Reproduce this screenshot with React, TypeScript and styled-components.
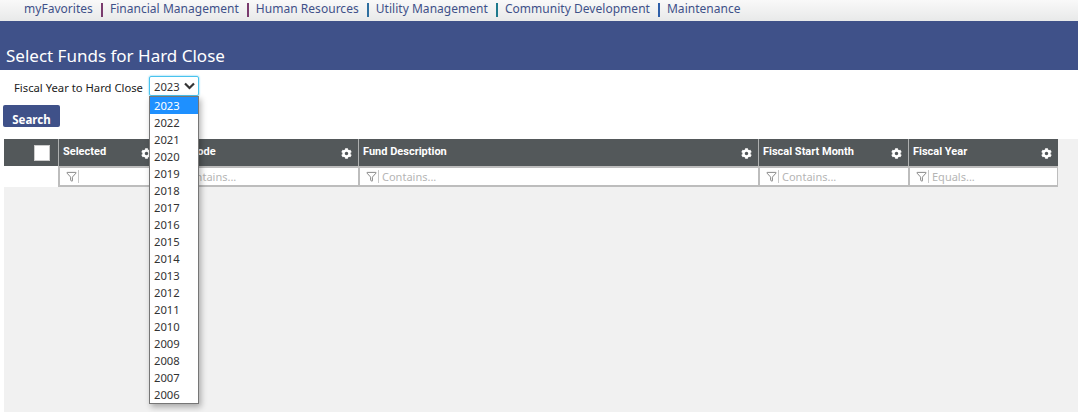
import { Fragment, FunctionComponent } from 'react'
import styled, { createGlobalStyle } from 'styled-components'
import { FaCog } from 'react-icons/fa'
import { Filter } from 'lucide-react'

const GlobalStyle = createGlobalStyle`
  html, body {
    margin: 0;
    padding: 0;
    background: #fff;
  }
  body {
    font-family: 'Noto Sans', 'Open Sans', sans-serif;
    overflow: hidden;
  }
`

const menus = [
  { label: 'myFavorites', bar: '#7a3b6e' },
  { label: 'Financial Management', bar: '#7a3b6e' },
  { label: 'Human Resources', bar: '#2f6f9f' },
  { label: 'Utility Management', bar: '#1f7a8c' },
  { label: 'Community Development', bar: '#2f5fa8' },
  { label: 'Maintenance', bar: '' }
]

const years = Array.from({ length: 18 }, (_, i) => 2023 - i)

const columns = [
  { title: 'Selected', placeholder: '' },
  { title: 'Fund Code', placeholder: 'Contains...' },
  { title: 'Fund Description', placeholder: 'Contains...' },
  { title: 'Fiscal Start Month', placeholder: 'Contains...' },
  { title: 'Fiscal Year', placeholder: 'Equals...' }
]

const Page = styled.div`
  position: relative;
  height: 412px;
  display: flex;
  flex-direction: column;
`

const NavBar = styled.nav`
  height: 21px;
  display: flex;
  align-items: center;
  padding-left: 24px;
  background: linear-gradient(#f9f9f9, #e8e9e9);
  font-size: 12px;
  letter-spacing: 0.03px;
  color: #3f5189;
`

const NavItem = styled.span`
  white-space: nowrap;
  margin-bottom: 4px;
`

const NavBarDivider = styled.span<{ $color: string }>`
  width: 2px;
  height: 14px;
  margin: 0 7px 1px 8px;
  background: ${p => p.$color};
`

const TitleBand = styled.header`
  height: 49px;
  box-sizing: border-box;
  padding: 23px 0 0 6px;
  background: #3f5189;
  color: #fff;
  font-size: 17px;
  line-height: 24px;
`

const SearchForm = styled.div`
  height: 69px;
  box-sizing: border-box;
  padding-top: 6px;
`

const FieldRow = styled.div`
  display: flex;
  align-items: center;
  padding-left: 14px;
  gap: 6px;
  font-size: 11.25px;
  color: #222;
`

const FieldLabel = styled.label`
  margin-top: 3px;
  white-space: nowrap;
`

const YearSelectWrap = styled.div`
  position: relative;
  width: 50px;
  height: 20px;
`

const YearValue = styled.div`
  box-sizing: border-box;
  width: 50px;
  height: 20px;
  display: flex;
  align-items: center;
  justify-content: space-between;
  padding: 0 3px 0 4px;
  border: 1px solid #49c3ee;
  box-shadow: 0 0 2px #49c3ee;
  border-radius: 2px;
  font-size: 11.25px;
  color: #333;
`

const Chevron = styled.svg`
  width: 11px;
  height: 8px;
  fill: none;
  stroke: #333;
  stroke-width: 2.2;
`

const YearList = styled.ul`
  position: absolute;
  top: 20px;
  left: 0;
  width: 50px;
  box-sizing: border-box;
  margin: 0;
  padding: 0;
  list-style: none;
  background: #fff;
  border: 1px solid #767676;
  box-shadow: 2px 3px 6px rgba(0, 0, 0, 0.3);
  z-index: 5;
`

const YearOption = styled.li<{ $active?: boolean }>`
  height: 17px;
  line-height: 17px;
  padding-left: 4px;
  font-size: 11.25px;
  color: ${p => (p.$active ? '#fff' : '#333')};
  background: ${p => (p.$active ? '#1e90ff' : 'transparent')};
`

const SearchButton = styled.button`
  display: block;
  width: 57px;
  height: 22px;
  margin: 9px 0 0 3px;
  padding: 7px 0 0;
  border: 0;
  border-radius: 2px;
  background: #3f5189;
  color: #fff;
  font-family: 'Noto Sans', sans-serif;
  font-size: 11.5px;
  font-weight: 700;
`

const GridArea = styled.section`
  flex: 1;
  margin-left: 4px;
  background: #f1f1f1;
`

const GridTable = styled.div`
  width: 1054px;
  display: grid;
  grid-template-columns: 54px 100px 200px 400px 150px 150px;
`

const CheckHeader = styled.div`
  height: 27px;
  box-sizing: border-box;
  background: #53585a;
  display: flex;
  justify-content: flex-end;
  align-items: center;
  padding-right: 8px;
`

const CheckBox = styled.span`
  width: 14px;
  height: 14px;
  background: #fff;
  border: 1px solid #ccc;
`

const HeaderCell = styled.div`
  position: relative;
  height: 27px;
  box-sizing: border-box;
  background: #53585a;
  border-left: 1px solid #aeb0b0;
  padding: 5px 0 0 4px;
  font-family: Roboto, sans-serif;
  font-size: 11px;
  font-weight: 700;
  line-height: 15px;
  color: #fff;
  white-space: nowrap;
`

const GearIcon = styled(FaCog)`
  position: absolute;
  right: 6px;
  top: 9px;
  width: 11px;
  height: 11px;
  color: #fff;
`

const BlankFilter = styled.div`
  height: 21px;
  background: #fff;
`

const FilterCell = styled.div`
  height: 21px;
  box-sizing: border-box;
  display: flex;
  align-items: center;
  padding-left: 6px;
  background: #fff;
  border-style: solid;
  border-color: #bdbdbd;
  border-width: 2px 0 2px 2px;
  font-size: 11px;
  color: #b5b5b5;
  &:last-child {
    border-right-width: 1px;
  }
`

const FunnelIcon = styled(Filter)`
  width: 11px;
  height: 11px;
  color: #555;
  flex: none;
`

const FilterText = styled.span`
  margin-left: 1px;
  padding-left: 3px;
  border-left: 1px solid #c8c8c8;
  line-height: 13px;
  min-height: 13px;
`

const App: FunctionComponent = () => {
  return (
    <Page>
      <GlobalStyle />
      <NavBar>
        {menus.map(menu => (
          <Fragment key={menu.label}>
            <NavItem>{menu.label}</NavItem>
            {menu.bar && <NavBarDivider $color={menu.bar} />}
          </Fragment>
        ))}
      </NavBar>
      <TitleBand>Select Funds for Hard Close</TitleBand>
      <SearchForm>
        <FieldRow>
          <FieldLabel>Fiscal Year to Hard Close</FieldLabel>
          <YearSelectWrap>
            <YearValue>
              2023
              <Chevron viewBox='0 0 11 8'>
                <path d='M1 1.5l4.5 4.5L10 1.5' />
              </Chevron>
            </YearValue>
            <YearList>
              {years.map((year, i) => (
                <YearOption key={year} $active={i === 0}>
                  {year}
                </YearOption>
              ))}
            </YearList>
          </YearSelectWrap>
        </FieldRow>
        <SearchButton>Search</SearchButton>
      </SearchForm>
      <GridArea>
        <GridTable>
          <CheckHeader>
            <CheckBox />
          </CheckHeader>
          {columns.map(col => (
            <HeaderCell key={col.title}>
              {col.title}
              <GearIcon />
            </HeaderCell>
          ))}
          <BlankFilter />
          {columns.map(col => (
            <FilterCell key={col.title}>
              <FunnelIcon strokeWidth={1.5} />
              <FilterText>{col.placeholder}</FilterText>
            </FilterCell>
          ))}
        </GridTable>
      </GridArea>
    </Page>
  )
}

export default App
